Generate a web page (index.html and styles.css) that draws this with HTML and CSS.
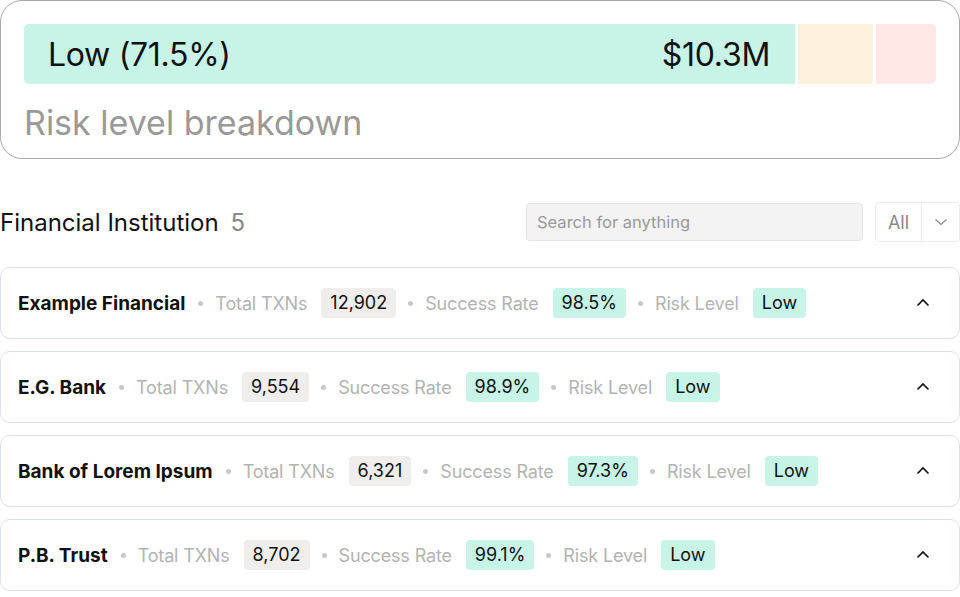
FILE: index.html
```html
<!DOCTYPE html>
<html lang="en">
<head>
    <meta charset="UTF-8">
    <meta name="viewport" content="width=device-width, initial-scale=1.0">
    <title>Risk Overview</title>
    <link rel="stylesheet" href="styles.css">
</head>
<body>
    <section class="breakdown">
        <div class="bar">
            <div class="seg seg-low">
                <span>Low (71.5%)</span>
                <span>$10.3M</span>
            </div>
            <div class="seg seg-mid"></div>
            <div class="seg seg-high"></div>
        </div>
        <h2 class="breakdown-title">Risk level breakdown</h2>
    </section>

    <div class="list-head">
        <h1 class="list-title">Financial Institution <span class="count">5</span></h1>
        <input class="search" type="text" placeholder="Search for anything">
        <div class="select">
            <span class="select-value">All</span>
            <span class="select-arrow">
                <svg width="16" height="14" viewBox="0 0 16 14"><path d="M2.5 4.5 L8 9.5 L13.5 4.5" fill="none" stroke="#888" stroke-width="1.2"/></svg>
            </span>
        </div>
    </div>

    <div class="rows">
        <div class="row">
            <span class="name">Example Financial</span>
            <span class="dot"></span>
            <span class="label">Total TXNs</span>
            <span class="pill">12,902</span>
            <span class="dot"></span>
            <span class="label">Success Rate</span>
            <span class="pill pill-green">98.5%</span>
            <span class="dot"></span>
            <span class="label">Risk Level</span>
            <span class="pill pill-green">Low</span>
            <svg class="chev" width="16" height="16" viewBox="0 0 16 16"><path d="M2.5 10.5 L8 5 L13.5 10.5" fill="none" stroke="#111" stroke-width="1.6"/></svg>
        </div>
        <div class="row">
            <span class="name">E.G. Bank</span>
            <span class="dot"></span>
            <span class="label">Total TXNs</span>
            <span class="pill">9,554</span>
            <span class="dot"></span>
            <span class="label">Success Rate</span>
            <span class="pill pill-green">98.9%</span>
            <span class="dot"></span>
            <span class="label">Risk Level</span>
            <span class="pill pill-green">Low</span>
            <svg class="chev" width="16" height="16" viewBox="0 0 16 16"><path d="M2.5 10.5 L8 5 L13.5 10.5" fill="none" stroke="#111" stroke-width="1.6"/></svg>
        </div>
        <div class="row">
            <span class="name">Bank of Lorem Ipsum</span>
            <span class="dot"></span>
            <span class="label">Total TXNs</span>
            <span class="pill">6,321</span>
            <span class="dot"></span>
            <span class="label">Success Rate</span>
            <span class="pill pill-green">97.3%</span>
            <span class="dot"></span>
            <span class="label">Risk Level</span>
            <span class="pill pill-green">Low</span>
            <svg class="chev" width="16" height="16" viewBox="0 0 16 16"><path d="M2.5 10.5 L8 5 L13.5 10.5" fill="none" stroke="#111" stroke-width="1.6"/></svg>
        </div>
        <div class="row">
            <span class="name">P.B. Trust</span>
            <span class="dot"></span>
            <span class="label">Total TXNs</span>
            <span class="pill">8,702</span>
            <span class="dot"></span>
            <span class="label">Success Rate</span>
            <span class="pill pill-green">99.1%</span>
            <span class="dot"></span>
            <span class="label">Risk Level</span>
            <span class="pill pill-green">Low</span>
            <svg class="chev" width="16" height="16" viewBox="0 0 16 16"><path d="M2.5 10.5 L8 5 L13.5 10.5" fill="none" stroke="#111" stroke-width="1.6"/></svg>
        </div>
    </div>
</body>
</html>
```

FILE: styles.css
```css
body {
    font-family: Inter, "Liberation Sans", sans-serif;
    margin: 0;
    width: 960px;
    color: #111;
    background: #fff;
}
.breakdown {
    border: 1px solid #aaa;
    border-radius: 22px;
    padding: 23px 23px 13px;
    width: 960px;
    box-sizing: border-box;
}
.bar {
    display: flex;
    gap: 3px;
    height: 60px;
    border-radius: 5px;
    overflow: hidden;
}
.seg {
    height: 100%;
}
.seg-low {
    width: 771px;
    background: #c8f4e7;
    display: flex;
    align-items: center;
    justify-content: space-between;
    padding: 0 25px 0 24px;
    box-sizing: border-box;
    font-size: 32px;
    letter-spacing: -0.3px;
}
.seg-mid {
    width: 75px;
    background: #fff2dc;
}
.seg-high {
    flex: 1;
    background: #ffe8e6;
}
.breakdown-title {
    margin: 17px 0 0;
    font-size: 34px;
    font-weight: 400;
    line-height: 44px;
    color: #999;
}
.list-head {
    display: flex;
    align-items: center;
    margin-top: 42px;
    height: 42px;
}
.list-title {
    flex: 1;
    margin: 0;
    font-size: 24px;
    font-weight: 400;
}
.count {
    color: #888;
    margin-left: 5px;
}
.search {
    width: 337px;
    height: 38px;
    box-sizing: border-box;
    background: #f3f3f3;
    border: 1px solid #e4e4e4;
    border-radius: 4px;
    padding: 0 10px;
    font-family: inherit;
    font-size: 16.5px;
    margin-right: 12px;
}
.search::placeholder {
    color: #999;
}
.select {
    display: flex;
    height: 40px;
    width: 85px;
    box-sizing: border-box;
    border: 1px solid #ececec;
    border-radius: 4px;
}
.select-value {
    width: 45px;
    display: flex;
    align-items: center;
    justify-content: center;
    font-size: 18px;
    color: #888;
    border-right: 1px solid #ececec;
}
.select-arrow {
    flex: 1;
    display: flex;
    align-items: center;
    justify-content: center;
}
.rows {
    margin-top: 24px;
    display: flex;
    flex-direction: column;
    gap: 12px;
}
.row {
    display: flex;
    align-items: center;
    gap: 12px;
    height: 72px;
    box-sizing: border-box;
    border: 1px solid #dde1ec;
    border-radius: 10px;
    padding: 0 28px 0 17px;
    font-size: 18px;
}
.name {
    font-size: 19px;
    font-weight: 700;
    margin-right: 1px;
}
.dot {
    width: 5px;
    height: 5px;
    border-radius: 50%;
    background: #c8c8c8;
    margin-top: 1px;
}
.label {
    color: #b3b3b3;
    letter-spacing: -0.15px;
    margin-right: 2px;
}
.pill {
    background: #efeeec;
    border-radius: 4px;
    padding: 4px 9px;
    line-height: 22px;
}
.pill-green {
    background: #c8f4e7;
}
.chev {
    margin-left: auto;
}
```
